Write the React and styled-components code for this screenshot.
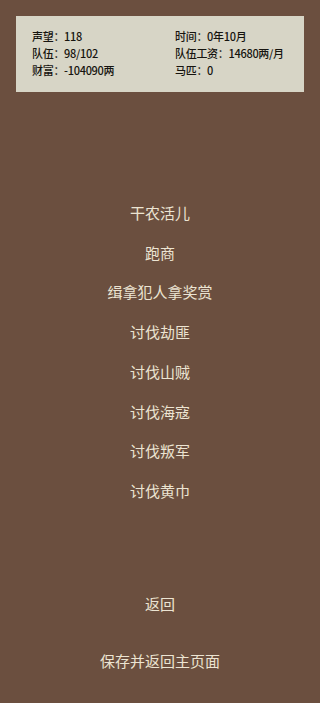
import React from "react";
import styled, { createGlobalStyle } from "styled-components";

const Global = createGlobalStyle`
  html, body { margin: 0; padding: 0; background: #6b4f3f; }
  body { font-family: "Noto Sans CJK SC", "Noto Sans", sans-serif; }
`;

const Page = styled.div`
  width: 320px;
  height: 703px;
  background: #6b4f3f;
  display: flex;
  flex-direction: column;
  box-sizing: border-box;
  padding-top: 16px;
  overflow: hidden;
`;

const Panel = styled.div`
  margin: 0 16px;
  height: 76px;
  box-sizing: border-box;
  background: #d7d5c6;
  padding: 12px 16px 0 16px;
  display: grid;
  grid-template-columns: 143px 1fr;
  grid-auto-rows: 17px;
  color: #16140f;
  font-family: "Noto Sans CJK SC", sans-serif;
  font-size: 11px;
  font-weight: 500;
  letter-spacing: -0.3px;
  line-height: 17px;
`;

const Stat = styled.div`
  white-space: nowrap;
`;

const Menu = styled.div`
  margin-top: 101px;
  display: flex;
  flex-direction: column;
  align-items: center;
`;

const Item = styled.div`
  color: #ece4d2;
  font-size: 15px;
  line-height: 39.7px;
  text-align: center;
`;

const Footer = styled.div`
  margin-top: ${(p) => p.$top}px;
  display: flex;
  flex-direction: column;
  align-items: center;
  gap: 18px;
`;

const stats = [
  ["声望：118", "时间：0年10月"],
  ["队伍：98/102", "队伍工资：14680两/月"],
  ["财富：-104090两", "马匹：0"],
];

const items = ["干农活儿", "跑商", "缉拿犯人拿奖赏", "讨伐劫匪", "讨伐山贼", "讨伐海寇", "讨伐叛军", "讨伐黄巾"];

export default function App() {
  return (
    <Page>
      <Global />
      <Panel>
        {stats.flat().map((s, i) => (
          <Stat key={i}>{s}</Stat>
        ))}
      </Panel>
      <Menu>
        {items.map((t) => (
          <Item key={t}>{t}</Item>
        ))}
      </Menu>
      <Footer $top={73}>
        <Item>返回</Item>
        <Item>保存并返回主页面</Item>
      </Footer>
    </Page>
  );
}
